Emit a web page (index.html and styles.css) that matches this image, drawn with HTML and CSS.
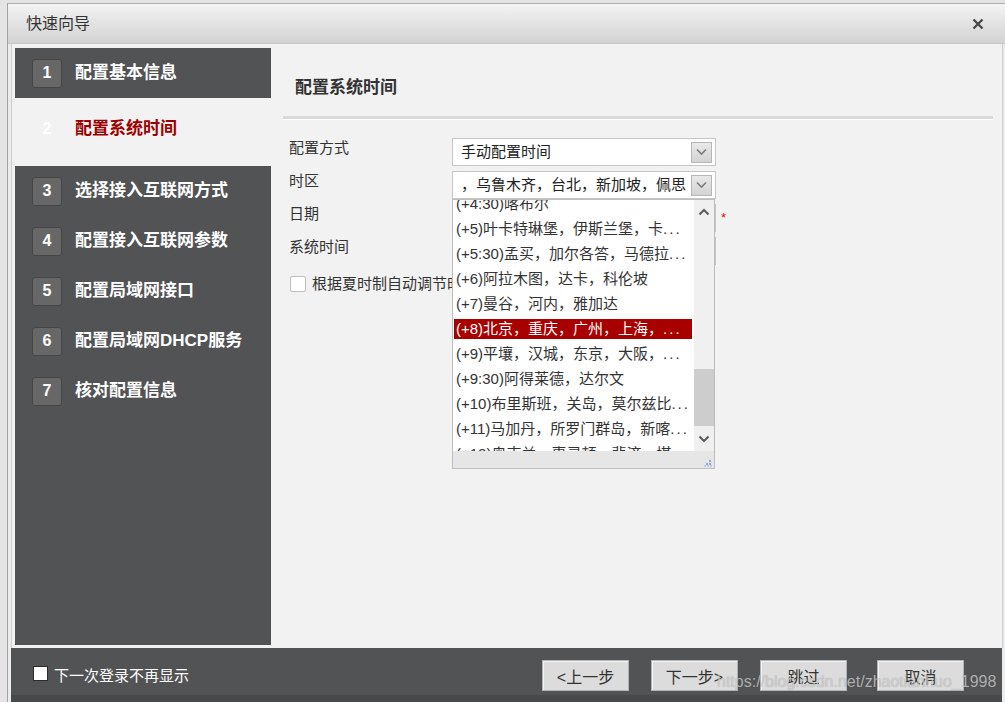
FILE: index.html
```html
<!DOCTYPE html>
<html lang="zh-CN">
<head>
<meta charset="utf-8">
<title>快速向导</title>
<link rel="stylesheet" href="styles.css">
</head>
<body>
<div class="dialog">
  <div class="titlebar">
    <span class="title">快速向导</span>
    <svg class="close" width="12" height="12" viewBox="0 0 12 12"><path d="M1.5 1.5 L10.5 10.5 M10.5 1.5 L1.5 10.5" stroke="#444" stroke-width="2.2" fill="none"/></svg>
  </div>
  <div class="body">
    <div class="sidebar">
      <div class="step"><span class="badge">1</span><span class="step-text">配置基本信息</span></div>
      <div class="step active"><span class="badge">2</span><span class="step-text">配置系统时间</span></div>
      <div class="step"><span class="badge">3</span><span class="step-text">选择接入互联网方式</span></div>
      <div class="step"><span class="badge">4</span><span class="step-text">配置接入互联网参数</span></div>
      <div class="step"><span class="badge">5</span><span class="step-text">配置局域网接口</span></div>
      <div class="step"><span class="badge">6</span><span class="step-text">配置局域网DHCP服务</span></div>
      <div class="step"><span class="badge">7</span><span class="step-text">核对配置信息</span></div>
    </div>
    <div class="main">
      <div class="main-title">配置系统时间</div>
      <div class="sep"></div>
      <div class="form">
        <div class="row">
          <span class="label">配置方式</span>
          <div class="select"><span class="select-text">手动配置时间</span><span class="arrow"><svg width="13" height="8" viewBox="0 0 13 8"><polyline points="2,1.5 6.5,6 11,1.5" stroke="#7c7c7c" stroke-width="1.6" fill="none"/></svg></span></div>
        </div>
        <div class="row">
          <span class="label">时区</span>
          <div class="select"><span class="select-text">，乌鲁木齐，台北，新加坡，佩思</span><span class="arrow"><svg width="13" height="8" viewBox="0 0 13 8"><polyline points="2,1.5 6.5,6 11,1.5" stroke="#7c7c7c" stroke-width="1.6" fill="none"/></svg></span></div>
        </div>
        <div class="row">
          <span class="label">日期</span>
          <div class="input"></div><span class="req">*</span>
        </div>
        <div class="row">
          <span class="label">系统时间</span>
          <div class="input"></div>
        </div>
        <div class="check-row">
          <span class="check"></span><span class="check-label">根据夏时制自动调节时间</span>
        </div>
      </div>
      <div class="dropdown">
        <div class="dd-top">
          <div class="dd-list">
            <ul class="items">
              <li>(+4:30)喀布尔</li>
              <li>(+5)叶卡特琳堡，伊斯兰堡，卡<span class="ell">...</span></li>
              <li>(+5:30)孟买，加尔各答，马德拉<span class="ell">...</span></li>
              <li>(+6)阿拉木图，达卡，科伦坡</li>
              <li>(+7)曼谷，河内，雅加达</li>
              <li class="sel">(+8)北京，重庆，广州，上海，<span class="ell">...</span></li>
              <li>(+9)平壤，汉城，东京，大阪，<span class="ell">...</span></li>
              <li>(+9:30)阿得莱德，达尔文</li>
              <li>(+10)布里斯班，关岛，莫尔兹比<span class="ell">...</span></li>
              <li>(+11)马加丹，所罗门群岛，新喀<span class="ell">...</span></li>
              <li>(+12)奥克兰，惠灵顿，斐济，堪<span class="ell">...</span></li>
            </ul>
          </div>
          <div class="sb">
            <div class="sb-btn"><svg width="12" height="8" viewBox="0 0 12 8"><polyline points="1.5,6.5 6,2 10.5,6.5" stroke="#5a5a5a" stroke-width="2" fill="none"/></svg></div>
            <div class="sb-track"><div class="sb-thumb"></div></div>
            <div class="sb-btn"><svg width="12" height="8" viewBox="0 0 12 8"><polyline points="1.5,1.5 6,6 10.5,1.5" stroke="#5a5a5a" stroke-width="2" fill="none"/></svg></div>
          </div>
        </div>
        <div class="dd-bottom">
          <svg class="grip" width="8" height="8" viewBox="0 0 8 8"><rect x="5" y="1" width="2" height="2" fill="#8aa6d6"/><rect x="2" y="4" width="2" height="2" fill="#8aa6d6"/><rect x="5" y="4" width="2" height="2" fill="#8aa6d6"/><rect x="0" y="6" width="2" height="2" fill="#b9c9e6"/><rect x="3" y="6" width="2" height="2" fill="#b9c9e6"/><rect x="6" y="6" width="2" height="2" fill="#b9c9e6"/></svg>
        </div>
      </div>
    </div>
  </div>
  <div class="footer">
    <span class="foot-check"></span><span class="foot-label">下一次登录不再显示</span>
    <div class="buttons">
      <span class="btn">&lt;上一步</span>
      <span class="btn">下一步&gt;</span>
      <span class="btn">跳过</span>
      <span class="btn btn-cancel">取消</span>
    </div>
  </div>
</div>
<div class="watermark">https://blog.csdn.net/zhaotianhuo_1998</div>
</body>
</html>
```
FILE: styles.css
```css
* { box-sizing: border-box; }
html, body { margin: 0; padding: 0; }
body {
  width: 1005px;
  height: 702px;
  overflow: hidden;
  position: relative;
  background: #e4e4e4;
  font-family: "Liberation Sans", "Noto Sans CJK SC", sans-serif;
  color: #333;
}
.dialog {
  margin: 3px 0 0 7px;
  height: 699px;
  border-left: 1px solid #a2a2a2;
  border-top: 1px solid #acacac;
  background: #ececec;
}
.titlebar {
  height: 40px;
  display: flex;
  align-items: center;
  justify-content: space-between;
  padding: 0 21px 0 18px;
  background: linear-gradient(#f3f3f3, #d2d2d2);
  border-bottom: 1px solid #c6c6c6;
}
.title { font-size: 16px; line-height: 20px; color: #333; }
.close { display: block; }

.body {
  margin: 0 2px 0 3px;
  height: 604px;
  display: flex;
  padding: 4px 0 3px 3px;
  background: #f2f2f2;
  border-left: 1px solid #cdcdcd;
  border-right: 1px solid #cdcdcd;
}
.sidebar {
  width: 256px;
  flex: none;
  background: #525355;
}
.step {
  height: 50px;
  display: flex;
  align-items: center;
  padding-left: 17px;
}
.step.active {
  height: 68px;
  background: #f2f2f2;
  padding-bottom: 7px;
}
.badge {
  width: 30px;
  height: 29px;
  display: flex;
  align-items: center;
  justify-content: center;
  background: #676767;
  border: 1px solid #464646;
  border-radius: 3px;
  color: #fff;
  font-weight: bold;
  font-size: 16px;
  font-family: "Liberation Sans", sans-serif;
}
.step.active .badge { background: transparent; border-color: transparent; }
.step-text {
  margin-left: 13px;
  color: #fff;
  font-weight: bold;
  font-size: 17px;
  line-height: 22px;
}
.step.active .step-text { color: #9c0000; }

.main {
  flex: 1;
  position: relative;
  padding-left: 12px;
}
.main-title {
  padding: 28px 0 0 12px;
  font-size: 17px;
  line-height: 24px;
  font-weight: bold;
  color: #333;
}
.sep {
  margin: 16px 9px 0 0;
  height: 4px;
  border-top: 3px solid #dadada;
  border-bottom: 1px solid #ffffff;
}
.form { margin-top: 18px; padding-left: 6px; }
.row { height: 33px; display: flex; align-items: flex-start; }
.label { width: 163px; flex: none; font-size: 15px; line-height: 20px; color: #333; }
.select, .input {
  width: 264px;
  height: 28px;
  border: 1px solid #c6c6c6;
  background: #fff;
}
.select {
  display: flex;
  align-items: center;
  justify-content: space-between;
  padding: 0 3px 0 8px;
}
.select-text {
  font-size: 15px;
  line-height: 20px;
  white-space: nowrap;
  overflow: hidden;
  color: #222;
}
.arrow {
  width: 21px;
  height: 21px;
  flex: none;
  margin-left: 4px;
  display: flex;
  align-items: center;
  justify-content: center;
  border: 1px solid #b6b6b6;
  background: linear-gradient(#e9e9e9, #d3d3d3);
}
.req { color: #e01010; font-size: 13px; line-height: 16px; margin: 6px 0 0 5px; }
.check-row { margin-top: 4px; height: 20px; display: flex; align-items: center; }
.check {
  width: 16px; height: 16px;
  margin-left: 1px;
  border: 1px solid #bdbdbd;
  border-radius: 2px;
  background: #fff;
}
.check-label { margin-left: 6px; font-size: 15px; line-height: 20px; color: #333; white-space: nowrap; }

.dropdown {
  position: absolute;
  left: 181px;
  top: 151px;
  width: 263px;
  height: 270px;
  border: 1px solid #bdbdbd;
  background: #fff;
  display: flex;
  flex-direction: column;
  z-index: 5;
}
.dd-top { height: 251px; display: flex; }
.dd-list { flex: 1; overflow: hidden; }
.items { list-style: none; margin: -6px 0 0 0; padding: 0 2px 0 1px; }
.items li {
  height: 20px;
  line-height: 20px;
  margin-bottom: 5px;
  padding-left: 2px;
  font-size: 15px;
  white-space: nowrap;
  overflow: hidden;
  color: #333;
}
.items li.sel { background: #a80000; color: #fff; }
.ell { letter-spacing: 2px; }
.sb { width: 20px; flex: none; background: #f0f0f0; display: flex; flex-direction: column; }
.sb-btn { height: 24px; display: flex; align-items: center; justify-content: center; }
.sb-track { flex: 1; }
.sb-thumb { margin-top: 145px; height: 57px; background: #cdcdcd; }
.dd-bottom {
  height: 17px;
  background: #e6e6e6;
  display: flex;
  justify-content: flex-end;
  align-items: flex-end;
  padding: 0 2px 1px 0;
}
.grip { display: block; }

.footer {
  margin: 0 3px 0 3px;
  height: 54px;
  background: #525355;
  border-bottom: 7px solid #48494b;
  display: flex;
  align-items: center;
  padding: 8px 38px 0 22px;
}
.foot-check {
  width: 15px; height: 15px;
  background: #fff;
  border: 1px solid #2c2c2c;
  margin-top: -4px;
}
.foot-label { margin-left: 6px; color: #fff; font-size: 15px; line-height: 20px; }
.buttons { margin-left: auto; display: flex; gap: 22px; }
.btn {
  width: 87px;
  height: 31px;
  display: flex;
  align-items: center;
  justify-content: center;
  background: #dcdcdc;
  border: 1px solid #b4b4b4;
  box-shadow: inset 1px 1px 0 #f4f4f4;
  font-size: 16px;
  color: #333;
}
.btn-cancel { margin-left: 8px; }

.watermark {
  position: absolute;
  left: 717px;
  top: 673px;
  font-family: "Liberation Sans", sans-serif;
  font-size: 16px;
  line-height: 18px;
  color: rgba(215, 215, 215, 0.75);
  text-shadow: 0 0 1px rgba(0, 0, 0, 0.25);
  white-space: nowrap;
}
```
